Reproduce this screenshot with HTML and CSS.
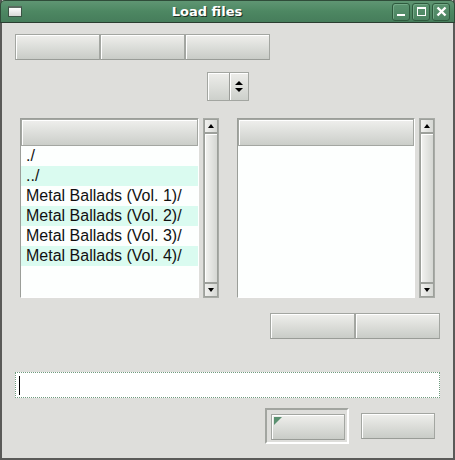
FILE: index.html
```html
<!DOCTYPE html>
<html lang="en">
<head>
    <meta charset="UTF-8">
    <title>Load files</title>
    <link rel="stylesheet" href="styles.css">
</head>
<body>
    <div class="window">
        <div class="titlebar">
            <div class="app-icon"></div>
            <div class="title">Load files</div>
            <div class="wm-buttons">
                <div class="wm-btn"><span class="wm-min"></span></div>
                <div class="wm-btn"><span class="wm-max"></span></div>
                <div class="wm-btn">
                    <svg width="11" height="11" viewBox="0 0 11 11">
                        <path d="M1.5 1.5 L9.5 9.5 M9.5 1.5 L1.5 9.5" stroke="#fff" stroke-width="2.4"/>
                    </svg>
                </div>
            </div>
        </div>

        <div class="content">
            <div class="toolbar">
                <button class="btn wide"></button>
                <button class="btn wide"></button>
                <button class="btn wide"></button>
            </div>

            <div class="spin-row">
                <div class="spin">
                    <div class="spin-field"></div>
                    <div class="spin-arrows">
                        <span class="arr-up"></span>
                        <span class="arr-down"></span>
                    </div>
                </div>
            </div>

            <div class="lists">
                <div class="list left">
                    <div class="list-header"></div>
                    <div class="list-body">
                        <div class="row">./</div>
                        <div class="row alt">../</div>
                        <div class="row">Metal Ballads (Vol. 1)/</div>
                        <div class="row alt">Metal Ballads (Vol. 2)/</div>
                        <div class="row">Metal Ballads (Vol. 3)/</div>
                        <div class="row alt">Metal Ballads (Vol. 4)/</div>
                    </div>
                </div>
                <div class="scrollbar">
                    <div class="sb-btn"><span class="sb-up"></span></div>
                    <div class="sb-thumb"></div>
                    <div class="sb-btn"><span class="sb-down"></span></div>
                </div>

                <div class="list right">
                    <div class="list-header"></div>
                    <div class="list-body"></div>
                </div>
                <div class="scrollbar">
                    <div class="sb-btn"><span class="sb-up"></span></div>
                    <div class="sb-thumb"></div>
                    <div class="sb-btn"><span class="sb-down"></span></div>
                </div>
            </div>

            <div class="pair-row">
                <button class="btn wide"></button>
                <button class="btn wide"></button>
            </div>

            <div class="entry">
                <span class="cursor"></span>
            </div>

            <div class="dialog-buttons">
                <div class="default-frame">
                    <button class="btn small ok"><span class="corner"></span></button>
                </div>
                <button class="btn small"></button>
            </div>
        </div>
    </div>
</body>
</html>
```

FILE: styles.css
```css
body {
    margin: 0;
    background-color: #dcdcd8;
    font-family: "Liberation Sans", Arial, sans-serif;
}

.window {
    width: 455px;
    height: 460px;
    box-sizing: border-box;
    background-color: #dededb;
    border-left: 2px solid #5a5a58;
    border-right: 2px solid #5a5a58;
    border-bottom: 2px solid #5a5a58;
    display: flex;
    flex-direction: column;
}

/* title bar */
.titlebar {
    height: 23px;
    margin: 0 -2px;
    box-sizing: border-box;
    display: flex;
    align-items: center;
    padding: 0 4px 0 7px;
    background: linear-gradient(#5f9673, #4d8762 50%, #467d5b);
    border: 1px solid #2f4c39;
    border-bottom-color: #2a3d30;
    border-radius: 5px 5px 0 0;
}

.app-icon {
    width: 12px;
    height: 8px;
    background: linear-gradient(#fdfdfd, #d9d9d6);
    border: 1px solid #3b5444;
    border-top: 2px solid #5a6b60;
}

.title {
    flex: 1;
    text-align: center;
    color: #fff;
    font-family: "DejaVu Sans", sans-serif;
    font-weight: bold;
    font-size: 13px;
    text-shadow: 1px 1px 0 #1e2f24;
}

.wm-buttons {
    display: flex;
    gap: 2px;
}

.wm-btn {
    width: 16px;
    height: 16px;
    border: 1px solid #2e5a3d;
    border-radius: 3px;
    background: linear-gradient(#5b9470, #4a8360);
    box-shadow: inset 1px 1px 0 #74a987;
    display: flex;
    align-items: center;
    justify-content: center;
}

.wm-min {
    width: 8px;
    height: 2px;
    background: #fff;
    margin-top: 7px;
}

.wm-max {
    width: 7px;
    height: 6px;
    border: 1px solid #fff;
    border-top-width: 2px;
}

/* body */
.content {
    flex: 1;
    padding: 11px 13px 0 13px;
    display: flex;
    flex-direction: column;
}

.btn {
    display: block;
    margin: 0;
    padding: 0;
    height: 26px;
    box-sizing: border-box;
    background: linear-gradient(#efefec, #c9ccc7);
    border: 1px solid #a3a6a1;
    border-bottom-color: #999c97;
    box-shadow: inset 1px 1px 0 #fff;
}

.btn.wide {
    width: 85px;
}

.btn.small {
    width: 74px;
}

.toolbar {
    display: flex;
}

.spin-row {
    display: flex;
    justify-content: center;
    margin-top: 12px;
}

.spin {
    width: 42px;
    height: 29px;
    box-sizing: border-box;
    display: flex;
    border: 1px solid #a3a6a1;
    background: linear-gradient(#ededea, #cdd0cb);
    box-shadow: inset 1px 1px 0 #fff;
}

.spin-field {
    width: 21px;
    border-right: 1px solid #9a9c98;
    box-shadow: 1px 0 0 #fff;
}

.spin-arrows {
    flex: 1;
    display: flex;
    flex-direction: column;
    align-items: center;
    justify-content: center;
    gap: 3px;
}

.arr-up, .sb-up {
    width: 0;
    height: 0;
    border-left: 4px solid transparent;
    border-right: 4px solid transparent;
    border-bottom: 4px solid #000;
}

.arr-down, .sb-down {
    width: 0;
    height: 0;
    border-left: 4px solid transparent;
    border-right: 4px solid transparent;
    border-top: 4px solid #000;
}

/* lists */
.lists {
    display: flex;
    margin-top: 17px;
    margin-left: 5px;
    height: 180px;
}

.list {
    box-sizing: border-box;
    border: 1px solid #9b9e99;
    border-right-color: #fff;
    border-bottom-color: #fff;
    background: #fdfffe;
    display: flex;
    flex-direction: column;
}

.list.left {
    width: 179px;
}

.list.right {
    width: 178px;
    margin-left: 18px;
}

.list-header {
    height: 27px;
    box-sizing: border-box;
    background: linear-gradient(#efefed, #cbcec9);
    border: 1px solid #a3a6a1;
    box-shadow: inset 1px 1px 0 #fff;
}

.list-body {
    flex: 1;
}

.row {
    height: 20px;
    line-height: 20px;
    padding-left: 5px;
    font-size: 16px;
    color: #111;
    white-space: nowrap;
}

.row.alt {
    background: #dafbf0;
}

.scrollbar {
    width: 16px;
    box-sizing: border-box;
    margin-left: 4px;
    border: 1px solid #a8aba6;
    background: #cfd2cd;
    display: flex;
    flex-direction: column;
}

.sb-btn {
    height: 14px;
    box-sizing: border-box;
    border: 1px solid #9da09b;
    background: linear-gradient(90deg, #f1f1ef, #d6d8d4);
    display: flex;
    align-items: center;
    justify-content: center;
}

.sb-up, .sb-down {
    border-left-width: 3px;
    border-right-width: 3px;
}

.sb-thumb {
    flex: 1;
    border: 1px solid #9da09b;
    background: linear-gradient(90deg, #f3f3f1, #d5d7d3);
    box-shadow: inset 1px 1px 0 #fff;
}

.pair-row {
    display: flex;
    justify-content: flex-end;
    margin-top: 15px;
}

/* entry */
.entry {
    margin-top: 33px;
    height: 26px;
    box-sizing: border-box;
    background: #fff;
    border: 1px dotted #6f9b7e;
    padding: 3px 0 0 3px;
}

.cursor {
    display: block;
    width: 1px;
    height: 19px;
    background: #000;
}

.dialog-buttons {
    display: flex;
    justify-content: flex-end;
    align-items: center;
    margin-top: 10px;
    margin-right: 5px;
    gap: 12px;
}

.default-frame {
    width: 84px;
    height: 36px;
    box-sizing: border-box;
    border: 2px solid #a2a5a0;
    border-right-color: #fff;
    border-bottom-color: #fff;
    padding: 4px 0 0 4px;
}

.btn.ok {
    position: relative;
}

.corner {
    position: absolute;
    left: 2px;
    top: 2px;
    width: 0;
    height: 0;
    border-top: 8px solid #5a9070;
    border-right: 8px solid transparent;
}
```
